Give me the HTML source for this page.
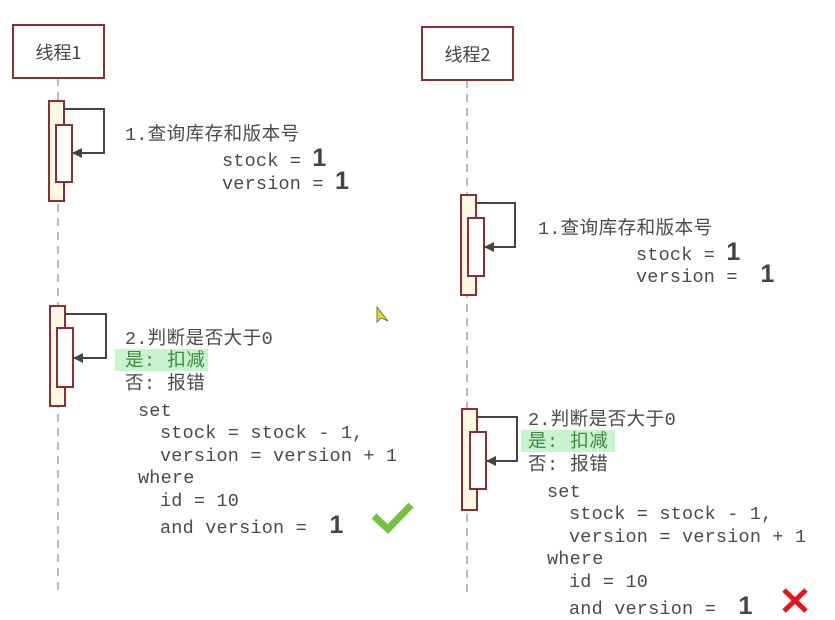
<!DOCTYPE html>
<html><head><meta charset="utf-8"><style>
body{margin:0;width:835px;height:619px;background:#fff;position:relative;overflow:hidden}
.t{position:absolute;font-family:"Liberation Mono","Noto Sans CJK SC",monospace;font-size:18.5px;color:#4a4a4a;white-space:pre;line-height:20px;letter-spacing:0.2px}
.c{letter-spacing:0.5px}
.b{font-family:"Liberation Sans",sans-serif;font-weight:bold;font-size:25px;color:#444}
.hl{position:absolute;background:#c9f2cf}
.g{color:#3f8a3f}
.box{position:absolute;border:2px solid #8b2f35;background:#fff;font-family:"Noto Sans CJK SC",sans-serif;font-size:18px;color:#444;display:flex;align-items:center;justify-content:center;box-sizing:border-box}
</style></head><body>
<svg width="835" height="619" style="position:absolute;left:0;top:0">
<defs><marker id="a" markerWidth="10" markerHeight="10" refX="9" refY="5" orient="auto" markerUnits="userSpaceOnUse"><path d="M0,0 L10,5 L0,10 Z" fill="#444"/></marker></defs>
<g stroke="#bbb" stroke-width="2" stroke-dasharray="8,6">
<line x1="58" y1="78" x2="58" y2="592"/><line x1="467" y1="80" x2="467" y2="595"/></g>
<g stroke="#8b2f35" stroke-width="2">
<rect x="49" y="101" width="15" height="100" fill="#fdf9e2"/><rect x="56" y="125" width="16" height="57" fill="#fff"/>
<rect x="461" y="195" width="15" height="100" fill="#fdf9e2"/><rect x="468" y="218" width="16" height="58" fill="#fff"/>
<rect x="50" y="306" width="15" height="100" fill="#fdf9e2"/><rect x="57" y="328" width="16" height="59" fill="#fff"/>
<rect x="462" y="409" width="15" height="101" fill="#fdf9e2"/><rect x="470" y="432" width="16" height="57" fill="#fff"/>
</g>
<g stroke="#444" stroke-width="2" fill="none" marker-end="url(#a)">
<path d="M64,109 H104 V153 H73"/><path d="M476,203 H515 V247 H485"/>
<path d="M65,314 H106 V358 H74"/><path d="M477,417 H517 V461 H487"/>
</g>
<path d="M374,516 L388,529 L411,505" stroke="#78bf45" stroke-width="7" fill="none"/>
<path d="M784,590 L806,611 M806,590 L784,611" stroke="#e8141c" stroke-width="5"/>
<path d="M377,307 L377,322 L381,318 L388,321 Z" fill="#d8e020" stroke="#555" stroke-width="0.8"/>
</svg>
<div class="box" style="left:12px;top:24px;width:93px;height:55px">线程1</div>
<div class="box" style="left:421px;top:26px;width:93px;height:55px">线程2</div>

<div class="t" style="left:125px;top:126px">1.<span class="c">查询库存和版本号</span></div>
<div class="t" style="left:222px;top:148px">stock = <span class="b">1</span></div>
<div class="t" style="left:222px;top:171px">version = <span class="b">1</span></div>

<div class="t" style="left:538px;top:220px">1.<span class="c">查询库存和版本号</span></div>
<div class="t" style="left:636px;top:242px">stock = <span class="b">1</span></div>
<div class="t" style="left:636px;top:264px">version =  <span class="b">1</span></div>

<div class="hl" style="left:115px;top:349px;width:93px;height:22px"></div>
<div class="t" style="left:125px;top:330px">2.<span class="c">判断是否大于</span>0</div>
<div class="t g" style="left:125px;top:352px"><span class="c">是: 扣减</span></div>
<div class="t" style="left:125px;top:375px"><span class="c">否: 报错</span></div>
<div class="t" style="left:138px;top:402px">set</div>
<div class="t" style="left:160px;top:424px">stock = stock - 1,</div>
<div class="t" style="left:160px;top:447px">version = version + 1</div>
<div class="t" style="left:138px;top:469px">where</div>
<div class="t" style="left:160px;top:492px">id = 10</div>
<div class="t" style="left:160px;top:515px">and version =  <span class="b">1</span></div>

<div class="hl" style="left:521px;top:430px;width:94px;height:22px"></div>
<div class="t" style="left:528px;top:411px">2.<span class="c">判断是否大于</span>0</div>
<div class="t g" style="left:528px;top:433px"><span class="c">是: 扣减</span></div>
<div class="t" style="left:528px;top:456px"><span class="c">否: 报错</span></div>
<div class="t" style="left:547px;top:483px">set</div>
<div class="t" style="left:569px;top:505px">stock = stock - 1,</div>
<div class="t" style="left:569px;top:528px">version = version + 1</div>
<div class="t" style="left:547px;top:550px">where</div>
<div class="t" style="left:569px;top:573px">id = 10</div>
<div class="t" style="left:569px;top:596px">and version =  <span class="b">1</span></div>
</body></html>
